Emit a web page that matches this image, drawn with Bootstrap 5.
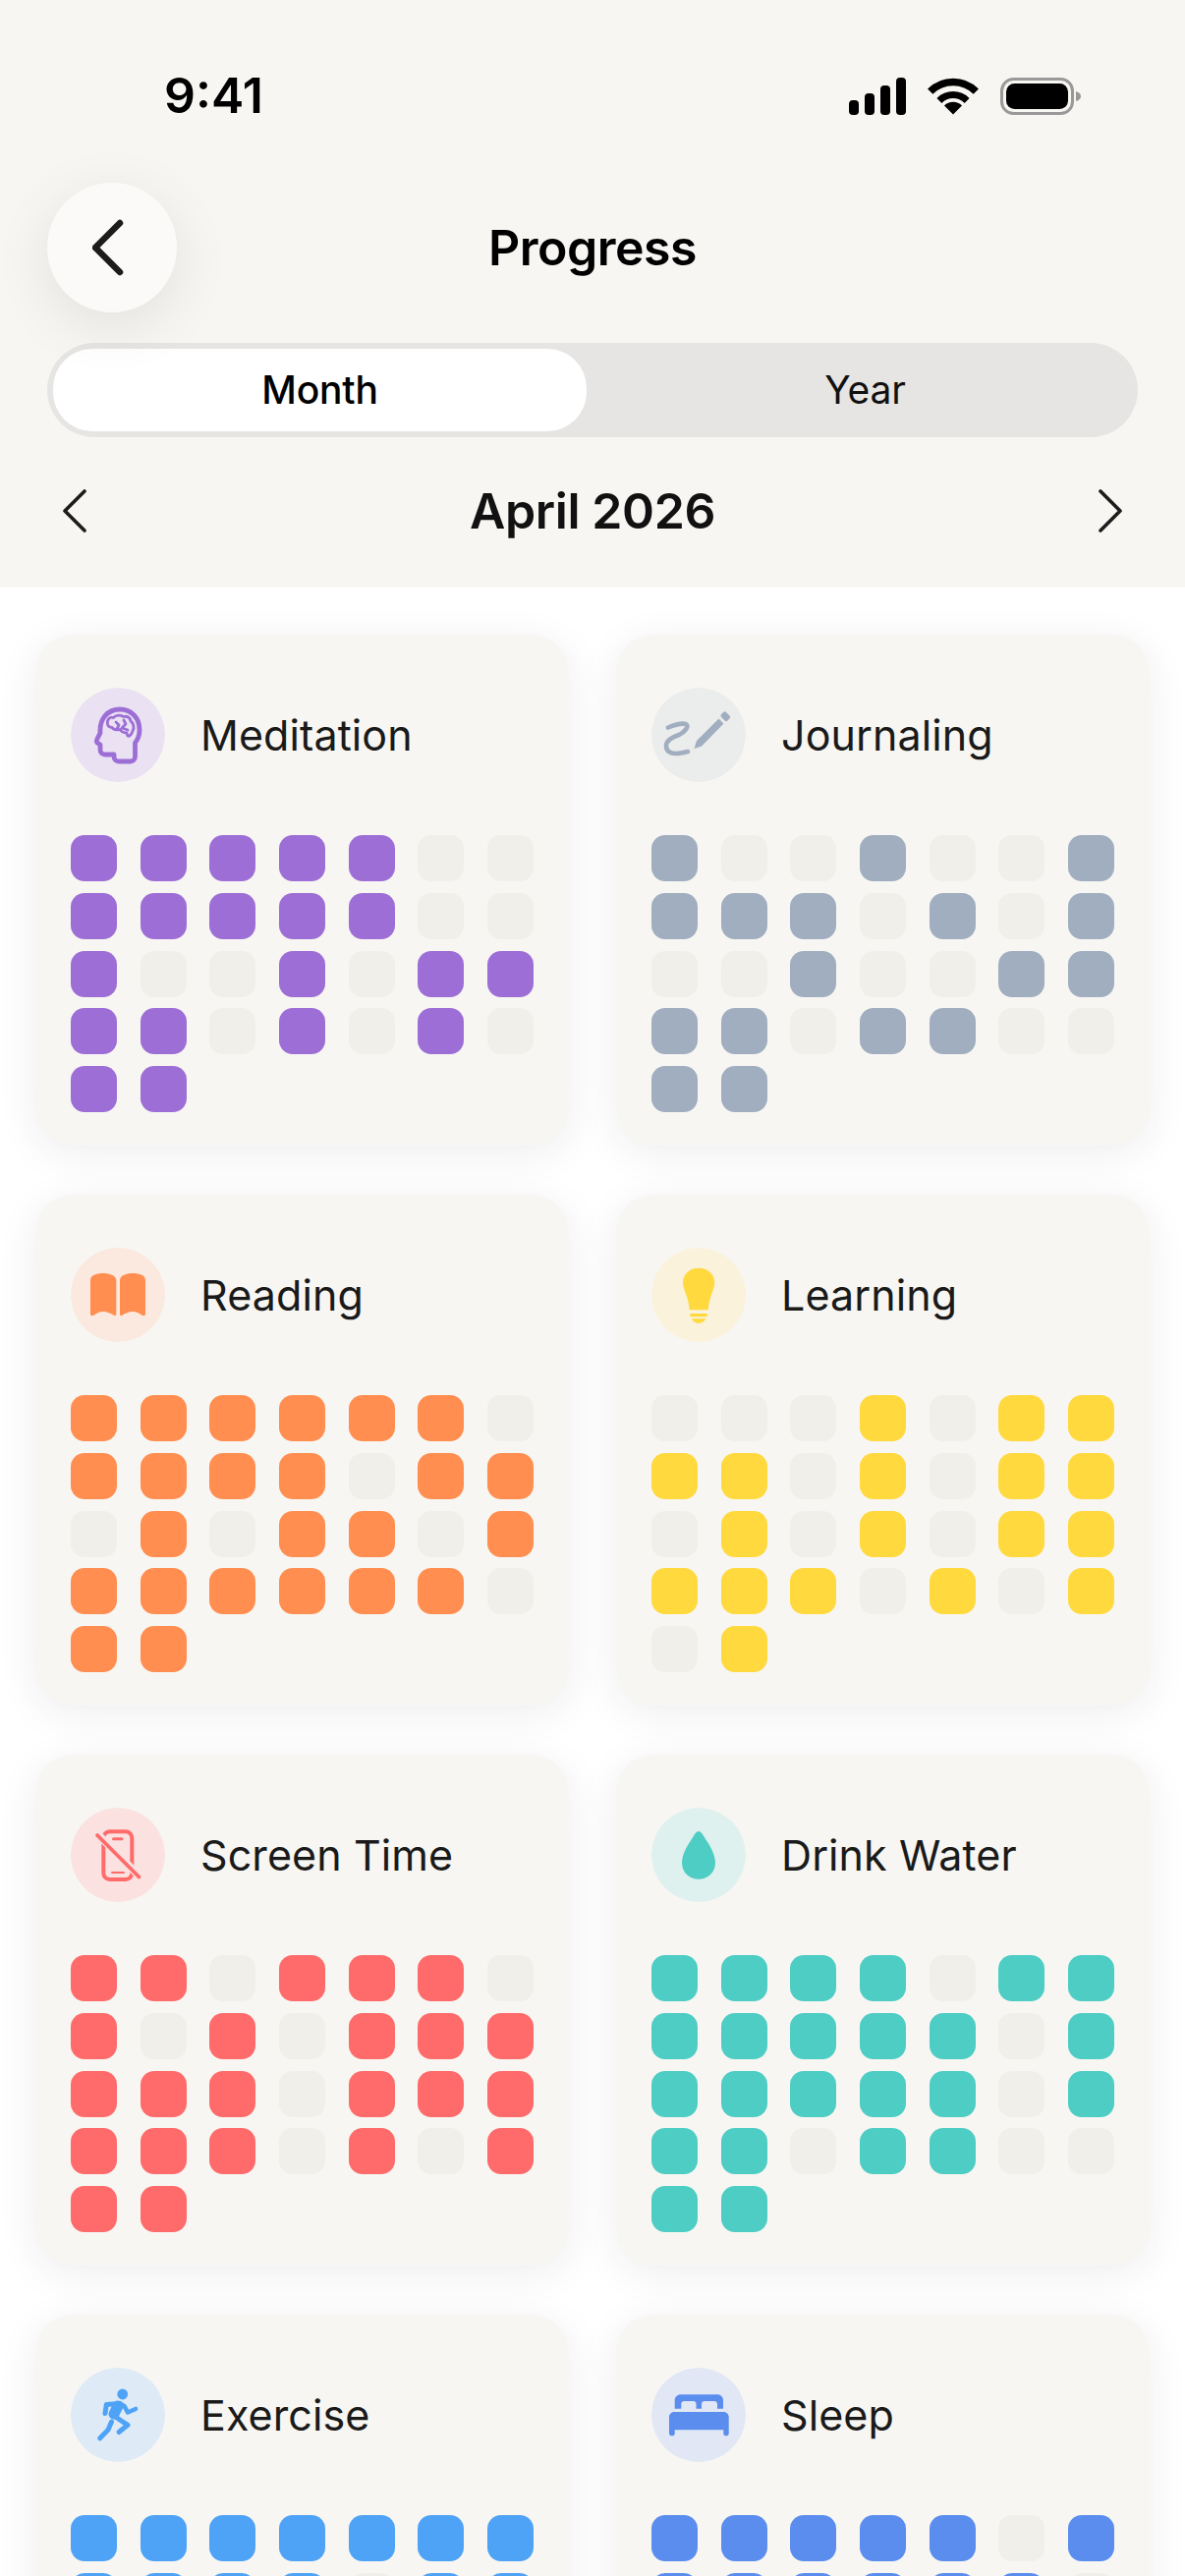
<!DOCTYPE html>
<html lang="en">
<head>
<meta charset="utf-8">
<title>Progress</title>
<link href="https://cdn.jsdelivr.net/npm/bootstrap@5.3.0/dist/css/bootstrap.min.css" rel="stylesheet">
<style>
html,body{height:2622px;overflow:hidden;background:#fff;font-family:Inter,"Noto Sans",sans-serif;color:#111}
.top-area{background:#f7f6f2;height:598px;padding:0 48px}
.status-line{height:186px;padding-top:67px}
.clock{font-size:50px;font-weight:600;line-height:60px;margin-left:119px;color:#000}
.status-icons{gap:22px;margin-top:12px;margin-right:58px}
.nav-line{height:132px}
.back-btn{width:132px;height:132px;flex:none;border-radius:50%;background:#fbfaf8;border:0;padding:0;position:relative;z-index:2;box-shadow:0 14px 60px rgba(0,0,0,.09)}
.page-title{font-size:50px;font-weight:600;margin:0;color:#000;line-height:60px;letter-spacing:-.5px}
.spacer-box{width:132px;flex:none}
.seg-wrap{margin-top:31px;height:96px;background:#e6e5e3;border-radius:48px;padding:6px;column-gap:12px}
.seg-wrap .nav-link{height:84px;border-radius:40px;color:#111;font-size:39px;font-weight:500;padding:0;background:transparent;display:flex;align-items:center;justify-content:center;letter-spacing:-.2px}
.seg-wrap .nav-link.active{background:#fff;color:#000}
.seg-wrap .seg-off{font-weight:400}
.month-line{margin-top:33px;height:84px;padding:0 15px 0 15px}
.month-name{font-size:50px;font-weight:600;color:#111;line-height:60px;letter-spacing:-.4px}
.arrow-btn{background:none;border:0;padding:0;line-height:0}
.habit-grid{display:grid;grid-template-columns:543px 543px;column-gap:48px;row-gap:50px;padding:48px 36px 0}
.habit-card{background:#f7f6f2;border:0;border-radius:38px;box-shadow:0 8px 40px rgba(40,40,70,.08);height:520px}
.habit-card .card-body{padding:54px 36px 34px}
.habit-icon{width:96px;height:96px;border-radius:50%;flex:none;display:block}
.habit-name{font-size:43px;font-weight:400;color:#1a1a1a;margin:0;margin-left:36px;line-height:50px;letter-spacing:.1px}
.dot-grid{display:grid;grid-template-columns:repeat(7,47px);grid-auto-rows:47px;column-gap:23.67px;row-gap:11.75px;margin-top:54px}
.dot-grid span{border-radius:14px;background:#f0efea}
.dot-grid span.on{background:var(--hue)}
.h-purple{--hue:#9d6fd6}
.h-slate{--hue:#a0aec0}
.h-orange{--hue:#ff8e50}
.h-yellow{--hue:#ffd93d}
.h-red{--hue:#ff6b6b}
.h-teal{--hue:#4ecdc4}
.h-blue{--hue:#4fa3f7}
.h-indigo{--hue:#5b8def}
</style>
</head>
<body>
<header class="top-area">
  <div class="status-line d-flex justify-content-between align-items-start">
    <span class="clock">9:41</span>
    <div class="status-icons d-flex align-items-center">
      <svg width="58" height="38" viewBox="0 0 58 38" fill="#000"><rect x="0" y="23" width="10" height="15" rx="4"/><rect x="16" y="16" width="10" height="22" rx="4"/><rect x="32" y="8" width="10" height="30" rx="4"/><rect x="48" y="0" width="10" height="38" rx="4"/></svg>
      <svg width="52" height="38" viewBox="0 0 52 38"><g fill="none" stroke="#000"><path d="M2.7 14.2A33 33 0 0 1 49.300 14.2" stroke-width="7.500"/><path d="M11.900 23.400A20 20 0 0 1 40.100 23.400" stroke-width="7"/></g><path d="M26 37.500L17 28.500A12.700 12.700 0 0 1 35 28.500Z" fill="#000"/></svg>
      <svg width="82" height="38" viewBox="0 0 82 38"><rect x="1.500" y="1.500" width="72" height="35" rx="12" fill="none" stroke="#999" stroke-width="3"/><rect x="6" y="6" width="63" height="26" rx="8.500" fill="#000"/><path d="M77 14q5 1.500 5 5t-5 5z" fill="#999"/></svg>
    </div>
  </div>
  <div class="nav-line d-flex align-items-center">
    <button class="back-btn d-flex align-items-center justify-content-center" type="button" aria-label="Back">
      <svg width="40" height="64" viewBox="0 0 40 64" fill="none" stroke="#1c1c1c" stroke-width="6.500" stroke-linecap="round" stroke-linejoin="round"><path d="M28 7 3 32l25 25"/></svg>
    </button>
    <h1 class="page-title flex-grow-1 text-center">Progress</h1>
    <div class="spacer-box"></div>
  </div>
  <ul class="nav nav-pills nav-justified seg-wrap">
    <li class="nav-item"><a class="nav-link active" href="#">Month</a></li>
    <li class="nav-item"><a class="nav-link seg-off" href="#">Year</a></li>
  </ul>
  <div class="month-line d-flex align-items-center justify-content-between">
    <button class="arrow-btn" type="button" aria-label="Previous"><svg width="26" height="44" viewBox="0 0 26 44" fill="none" stroke="#1c1c1c" stroke-width="3.600" stroke-linecap="round" stroke-linejoin="round"><path d="M23 2 3 22l20 20"/></svg></button>
    <span class="month-name">April 2026</span>
    <button class="arrow-btn" type="button" aria-label="Next"><svg width="26" height="44" viewBox="0 0 26 44" fill="none" stroke="#1c1c1c" stroke-width="3.600" stroke-linecap="round" stroke-linejoin="round"><path d="M3 2l20 20L3 42"/></svg></button>
  </div>
</header>

<main class="habit-grid">

  <section class="card habit-card h-purple"><div class="card-body">
    <div class="d-flex align-items-center">
      <svg class="habit-icon" viewBox="0 0 96 96"><circle cx="48" cy="48" r="48" fill="#eae2f2"/><g fill="none" stroke="#9d6fd6" stroke-linejoin="round" stroke-linecap="round"><path stroke-width="4.800" d="M30 46C29 31 38 22 50 22c12 0 20 9 20 21 0 6-2 10-4.500 13v14c0 3-2 5-5 5H49c-3 0-5-2-5-5v-2H35c-3 0-5-2-5-5v-5l-3-2c-1-1-1-2 0-4z"/><path stroke-width="2.800" d="M37.500 37c-1-5 3-8 6-6.500 2-3 8-3 10-1 4-1 7 1 7.500 4.500 3 2 4 7 2 10-1 3-3 6-5 5-1-1-1-2-1-3-4 0-6-2-7-3.500-3 1-7 0-8-2-3-.5-5-2-4.500-4zM46 35l3 3-2 4M54 33l2 4-4 4 6 2"/></g></svg>
      <h2 class="habit-name">Meditation</h2>
    </div>
    <div class="dot-grid">
      <span class="on"></span><span class="on"></span><span class="on"></span><span class="on"></span><span class="on"></span><span></span><span></span>
      <span class="on"></span><span class="on"></span><span class="on"></span><span class="on"></span><span class="on"></span><span></span><span></span>
      <span class="on"></span><span></span><span></span><span class="on"></span><span></span><span class="on"></span><span class="on"></span>
      <span class="on"></span><span class="on"></span><span></span><span class="on"></span><span></span><span class="on"></span><span></span>
      <span class="on"></span><span class="on"></span>
    </div>
  </div></section>

  <section class="card habit-card h-slate"><div class="card-body">
    <div class="d-flex align-items-center">
      <svg class="habit-icon" viewBox="0 0 96 96"><circle cx="48" cy="48" r="48" fill="#ebecec"/><path d="M17 40.500c6-2.500 14-4.500 18-3.500 4 2-1 8-7 11-6 2-13 5-13 11 0 6 4 8 10 8 4 0 8-1 12-2" fill="none" stroke="#a0aec0" stroke-width="4.600" stroke-linecap="round" stroke-linejoin="round"/><path d="M43.500 62 46 54 68.500 31.500 73.500 36.500 51 59.500z" fill="#a0aec0"/><rect x="70.800" y="25.700" width="9" height="7" rx="2" transform="rotate(45 75.300 29.200)" fill="#a0aec0"/></svg>
      <h2 class="habit-name">Journaling</h2>
    </div>
    <div class="dot-grid">
      <span class="on"></span><span></span><span></span><span class="on"></span><span></span><span></span><span class="on"></span>
      <span class="on"></span><span class="on"></span><span class="on"></span><span></span><span class="on"></span><span></span><span class="on"></span>
      <span></span><span></span><span class="on"></span><span></span><span></span><span class="on"></span><span class="on"></span>
      <span class="on"></span><span class="on"></span><span></span><span class="on"></span><span class="on"></span><span></span><span></span>
      <span class="on"></span><span class="on"></span>
    </div>
  </div></section>

  <section class="card habit-card h-orange"><div class="card-body">
    <div class="d-flex align-items-center">
      <svg class="habit-icon" viewBox="0 0 96 96"><circle cx="48" cy="48" r="48" fill="#fbe8de"/><g fill="#ff8e50"><path d="M20 33C20 28 26 26 33 26 39 26 46 28 46.300 33V68Q46 69.500 44.500 69C39 66 36 65 33 65 29 65 26 67 23 69Q20 69.500 20 68Z"/><path d="M76 33C76 28 70 26 63 26 57 26 50.300 28 50 33V68Q50.300 69.500 51.800 69C57 66 60 65 63 65 67 65 70 67 73 69Q76 69.500 76 68Z"/></g></svg>
      <h2 class="habit-name">Reading</h2>
    </div>
    <div class="dot-grid">
      <span class="on"></span><span class="on"></span><span class="on"></span><span class="on"></span><span class="on"></span><span class="on"></span><span></span>
      <span class="on"></span><span class="on"></span><span class="on"></span><span class="on"></span><span></span><span class="on"></span><span class="on"></span>
      <span></span><span class="on"></span><span></span><span class="on"></span><span class="on"></span><span></span><span class="on"></span>
      <span class="on"></span><span class="on"></span><span class="on"></span><span class="on"></span><span class="on"></span><span class="on"></span><span></span>
      <span class="on"></span><span class="on"></span>
    </div>
  </div></section>

  <section class="card habit-card h-yellow"><div class="card-body">
    <div class="d-flex align-items-center">
      <svg class="habit-icon" viewBox="0 0 96 96"><circle cx="48" cy="48" r="48" fill="#faf2da"/><g fill="#ffd93d"><path d="M48 20.700C38.500 20.700 32 27 32 35.500 32 42 37.500 49 38.700 63.300H57.700C58.800 49 64.300 42 64.300 35.500 64.300 27 57.500 20.700 48 20.700Z"/><rect x="39" y="67" width="18" height="3.300" rx="1.600"/><path d="M41 72.300H55C54 75.200 51.500 76.800 48 76.800S42 75.200 41 72.300Z"/></g></svg>
      <h2 class="habit-name">Learning</h2>
    </div>
    <div class="dot-grid">
      <span></span><span></span><span></span><span class="on"></span><span></span><span class="on"></span><span class="on"></span>
      <span class="on"></span><span class="on"></span><span></span><span class="on"></span><span></span><span class="on"></span><span class="on"></span>
      <span></span><span class="on"></span><span></span><span class="on"></span><span></span><span class="on"></span><span class="on"></span>
      <span class="on"></span><span class="on"></span><span class="on"></span><span></span><span class="on"></span><span></span><span class="on"></span>
      <span></span><span class="on"></span>
    </div>
  </div></section>

  <section class="card habit-card h-red"><div class="card-body">
    <div class="d-flex align-items-center">
      <svg class="habit-icon" viewBox="0 0 96 96"><circle cx="48" cy="48" r="48" fill="#fbe1e0"/><g fill="none" stroke="#ff6b6b" stroke-linecap="round"><rect x="33.300" y="24.300" width="29" height="48.700" rx="6.500" stroke-width="4"/><path d="M43.500 31.700h8.500" stroke-width="3"/><path d="M42 66h12" stroke-width="2"/><path d="M25 24.500 72.500 72.500" stroke="#fbe1e0" stroke-width="8"/><path d="M27 28 69.500 70.500" stroke-width="3.800"/></g></svg>
      <h2 class="habit-name">Screen Time</h2>
    </div>
    <div class="dot-grid">
      <span class="on"></span><span class="on"></span><span></span><span class="on"></span><span class="on"></span><span class="on"></span><span></span>
      <span class="on"></span><span></span><span class="on"></span><span></span><span class="on"></span><span class="on"></span><span class="on"></span>
      <span class="on"></span><span class="on"></span><span class="on"></span><span></span><span class="on"></span><span class="on"></span><span class="on"></span>
      <span class="on"></span><span class="on"></span><span class="on"></span><span></span><span class="on"></span><span></span><span class="on"></span>
      <span class="on"></span><span class="on"></span>
    </div>
  </div></section>

  <section class="card habit-card h-teal"><div class="card-body">
    <div class="d-flex align-items-center">
      <svg class="habit-icon" viewBox="0 0 96 96"><circle cx="48" cy="48" r="48" fill="#dff1ee"/><path d="M48 24C45.500 24 44 27 41.500 31 37 38 31 47 31 56 31 66 38.500 72.700 48 72.700S65 66 65 56C65 47 59 38 54.500 31 52 27 50.500 24 48 24Z" fill="#4ecdc4"/></svg>
      <h2 class="habit-name">Drink Water</h2>
    </div>
    <div class="dot-grid">
      <span class="on"></span><span class="on"></span><span class="on"></span><span class="on"></span><span></span><span class="on"></span><span class="on"></span>
      <span class="on"></span><span class="on"></span><span class="on"></span><span class="on"></span><span class="on"></span><span></span><span class="on"></span>
      <span class="on"></span><span class="on"></span><span class="on"></span><span class="on"></span><span class="on"></span><span></span><span class="on"></span>
      <span class="on"></span><span class="on"></span><span></span><span class="on"></span><span class="on"></span><span></span><span></span>
      <span class="on"></span><span class="on"></span>
    </div>
  </div></section>

  <section class="card habit-card h-blue"><div class="card-body">
    <div class="d-flex align-items-center">
      <svg class="habit-icon" viewBox="0 0 96 96"><circle cx="48" cy="48" r="48" fill="#deeaf6"/><circle cx="52.700" cy="27" r="5.400" fill="#4fa3f7"/><g fill="none" stroke="#4fa3f7" stroke-linecap="round" stroke-linejoin="round"><path d="M35 46.500 36.300 37.500 50 36.500" stroke-width="5"/><path d="M50 36.500 54.500 39 58 45.500 66 42" stroke-width="4.600"/><path d="M48 39 44 47" stroke-width="11"/><path d="M44 49 58 58.300 49 65.500" stroke-width="5"/><path d="M41.500 55 38 63.300 29.700 71.800" stroke-width="5"/></g></svg>
      <h2 class="habit-name">Exercise</h2>
    </div>
    <div class="dot-grid">
      <span class="on"></span><span class="on"></span><span class="on"></span><span class="on"></span><span class="on"></span><span class="on"></span><span class="on"></span>
      <span class="on"></span><span class="on"></span><span class="on"></span><span class="on"></span><span></span><span class="on"></span><span class="on"></span>
      <span class="on"></span><span></span><span class="on"></span><span class="on"></span><span class="on"></span><span></span><span class="on"></span>
      <span class="on"></span><span class="on"></span><span></span><span class="on"></span><span class="on"></span><span class="on"></span><span></span>
      <span class="on"></span><span class="on"></span>
    </div>
  </div></section>

  <section class="card habit-card h-indigo"><div class="card-body">
    <div class="d-flex align-items-center">
      <svg class="habit-icon" viewBox="0 0 96 96"><circle cx="48" cy="48" r="48" fill="#e1e7f4"/><g fill="#5b8def"><path fill-rule="evenodd" d="M30 27.300H67C70.500 27.300 73 29.800 73 33V41.700H67V37C67 35 65.500 34 64 34H54C52 34 51 35 51 37V41.700H45.500V37C45.500 35 44.500 34 42.500 34H33.300C31.500 34 30.300 35 30.300 37V41.700H23.700V33C23.700 29.800 26.500 27.300 30 27.300Z"/><path d="M23 45H73.500C76.500 45 78.700 47.500 78.700 50V67C78.700 68.500 77.500 69.300 76 69.300S73.300 68.500 73.300 67V63.300H23.700V67C23.700 68.500 22.500 69.300 21 69.300S18 68.500 18 67V50C18 47.500 20.200 45 23 45Z"/></g></svg>
      <h2 class="habit-name">Sleep</h2>
    </div>
    <div class="dot-grid">
      <span class="on"></span><span class="on"></span><span class="on"></span><span class="on"></span><span class="on"></span><span></span><span class="on"></span>
      <span class="on"></span><span class="on"></span><span class="on"></span><span class="on"></span><span class="on"></span><span class="on"></span><span></span>
      <span class="on"></span><span class="on"></span><span></span><span class="on"></span><span class="on"></span><span class="on"></span><span class="on"></span>
      <span class="on"></span><span></span><span class="on"></span><span class="on"></span><span></span><span class="on"></span><span class="on"></span>
      <span class="on"></span><span class="on"></span>
    </div>
  </div></section>

</main>
</body>
</html>
